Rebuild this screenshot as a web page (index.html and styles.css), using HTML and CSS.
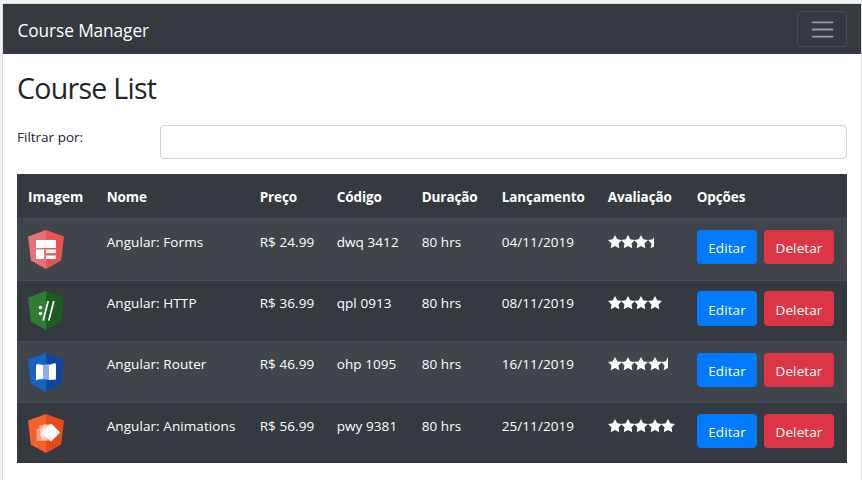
FILE: index.html
```
<!DOCTYPE html>
<html lang="pt-BR">
<head>
<meta charset="utf-8">
<title>Course Manager</title>
<link rel="stylesheet" href="styles.css">
</head>
<body>
<svg class="defs" aria-hidden="true">
  <symbol id="star" viewBox="0 0 14 14"><path d="M7 0 9.200 4.300l4.700.7-3.400 3.400.8 4.900L7 11.100l-4.300 2.200.8-4.900L.1 5l4.700-.7z"/></symbol>
</svg>
<div class="window">
  <nav class="navbar">
    <a class="brand">Course Manager</a>
    <button class="toggler" aria-label="Menu">
      <svg width="27" height="27" viewBox="0 0 30 30"><path d="M4 7h22M4 15h22M4 23h22" stroke="#fff" stroke-opacity=".5" stroke-width="2" stroke-linecap="round"/></svg>
    </button>
  </nav>
  <main class="content">
    <h2 class="title">Course List</h2>
    <div class="filter">
      <label class="filter-label" for="filter">Filtrar por:</label>
      <input class="filter-input" id="filter" type="text">
    </div>
    <table class="courses">
      <colgroup><col class="c-image"><col class="c-name"><col class="c-price"><col class="c-code"><col class="c-duration"><col class="c-date"><col class="c-rating"><col class="c-options"></colgroup>
      <thead>
        <tr><th>Imagem</th><th>Nome</th><th>Preço</th><th>Código</th><th>Duração</th><th>Lançamento</th><th>Avaliação</th><th>Opções</th></tr>
      </thead>
      <tbody>
        <tr class="odd tall low">
          <td><svg class="logo" viewBox="0 0 36 40"><path fill="#e57373" d="M18 0 0 6.500l2.800 24L18 39z"/><path fill="#ef5350" d="M18 0 36 6.500l-2.800 24L18 39z"/><path fill="#fff" d="M8 10h20v8H8zM8 19.500h8V29H8zM18 19.500h10v3.700H18zM18 25.500h10V29H18z"/></svg></td>
          <td>Angular: Forms</td><td>R$ 24.99</td><td>dwq 3412</td><td>80 hrs</td><td>04/11/2019</td>
          <td><div class="stars r35"><svg><use href="#star"/></svg><svg><use href="#star"/></svg><svg><use href="#star"/></svg><svg><use href="#star"/></svg></div></td>
          <td><div class="actions"><button class="btn edit">Editar</button><button class="btn delete">Deletar</button></div></td>
        </tr>
        <tr class="tight">
          <td><svg class="logo" viewBox="0 0 36 40"><path fill="#2e7d32" d="M18 0 0 6.500l2.800 24L18 39z"/><path fill="#1b5e20" d="M18 0 36 6.500l-2.800 24L18 39z"/><circle cx="12.500" cy="16.500" r="1.700" fill="#fff"/><circle cx="12.500" cy="22.500" r="1.700" fill="#fff"/><path d="M20.200 10 15.200 29.500M25.800 10 20.800 29.500" fill="none" stroke="#fff" stroke-width="1.700"/></svg></td>
          <td>Angular: HTTP</td><td>R$ 36.99</td><td>qpl 0913</td><td>80 hrs</td><td>08/11/2019</td>
          <td><div class="stars r40"><svg><use href="#star"/></svg><svg><use href="#star"/></svg><svg><use href="#star"/></svg><svg><use href="#star"/></svg></div></td>
          <td><div class="actions"><button class="btn edit">Editar</button><button class="btn delete">Deletar</button></div></td>
        </tr>
        <tr class="odd">
          <td><svg class="logo" viewBox="0 0 36 40"><path fill="#1565c0" d="M18 0 0 6.500l2.800 24L18 39z"/><path fill="#0d47a1" d="M18 0 36 6.500l-2.800 24L18 39z"/><path fill="#fff" d="m8 12 1.500-1 5.500 1v14l-5.500.500L8 27.500zM21 12l6-2 1 1v15.500l-7 .5z"/><path fill="#90afe0" d="m15 12 6-1v16l-6-1z"/></svg></td>
          <td>Angular: Router</td><td>R$ 46.99</td><td>ohp 1095</td><td>80 hrs</td><td>16/11/2019</td>
          <td><div class="stars r45"><svg><use href="#star"/></svg><svg><use href="#star"/></svg><svg><use href="#star"/></svg><svg><use href="#star"/></svg><svg><use href="#star"/></svg></div></td>
          <td><div class="actions"><button class="btn edit">Editar</button><button class="btn delete">Deletar</button></div></td>
        </tr>
        <tr class="low">
          <td><svg class="logo" viewBox="0 0 36 40"><path fill="#f4622c" d="M18 0 0 6.500l2.800 24L18 39z"/><path fill="#e64a19" d="M18 0 36 6.500l-2.800 24L18 39z"/><path fill="#fff" fill-opacity=".4" d="M8.500 14.500h13V27h-13z"/><path fill="#fff" fill-opacity=".45" d="m11 11.500 12-1.500 2 15-11.500 1z"/><path fill="#fff" fill-opacity=".5" d="m16 10 11 3-4 13-11-5z"/><path fill="#fff" d="m23 9.500 9.300 9-9.300 9-9.300-9z"/></svg></td>
          <td>Angular: Animations</td><td>R$ 56.99</td><td>pwy 9381</td><td>80 hrs</td><td>25/11/2019</td>
          <td><div class="stars r50"><svg><use href="#star"/></svg><svg><use href="#star"/></svg><svg><use href="#star"/></svg><svg><use href="#star"/></svg><svg><use href="#star"/></svg></div></td>
          <td><div class="actions"><button class="btn edit">Editar</button><button class="btn delete">Deletar</button></div></td>
        </tr>
      </tbody>
    </table>
  </main>
</div>
</body>
</html>
```
FILE: styles.css
```
* { box-sizing: border-box; }
body {
  margin: 0;
  height: 480px;
  overflow: hidden;
  padding: 3px 0 0 2px;
  background: #f2f2f2;
  color: #212529;
  font: 13.5px/21px "Open Sans", "Noto Sans", sans-serif;
}
.defs { display: none; }
.window {
  width: 860px;
  height: 477px;
  border: 1px solid #dcdcdc;
  border-bottom: 0;
  background: #fff;
}
.navbar {
  display: flex;
  justify-content: space-between;
  align-items: center;
  height: 50px;
  padding: 0 14px;
  background: #343a40;
}
.brand { color: #fff; font-size: 17.300px; letter-spacing: -0.1px; padding: 3px 0 0 0.5px; }
.toggler {
  display: flex;
  align-items: center;
  justify-content: center;
  width: 50px;
  height: 36px;
  padding: 0;
  border: 1px solid #484e53;
  border-radius: 4px;
  background: transparent;
}
.content { padding: 17px 14px 0; }
.title { margin: 0 0 20px; font-size: 28.500px; font-weight: 400; line-height: 34px; letter-spacing: -0.7px; }
.filter { display: flex; margin-bottom: 15px; }
.filter-label { width: 143px; padding-top: 2px; }
.filter-input { flex: 1; height: 34px; border: 1px solid #ced4da; border-radius: 4px; background: #fff; }
.courses { width: 830px; table-layout: fixed; border-collapse: separate; border-spacing: 0; background: #343a40; color: #fff; letter-spacing: 0.08px; }
.c-image { width: 79px; }
.c-name { width: 153px; }
.c-price { width: 77px; }
.c-code { width: 85px; }
.c-duration { width: 80px; }
.c-date { width: 106px; }
.c-rating { width: 89px; }
.c-options { width: 161px; }
th { height: 44px; padding: 3px 0 0 10.700px; text-align: left; font-weight: 700; letter-spacing: -0.1px; white-space: nowrap; }
td { height: 61px; padding: 12px 0 0 10.700px; border-top: 1px solid #454d55; vertical-align: top; white-space: nowrap; }
td:first-child, td:last-child { padding: 11px 0 0 11px; }
th:first-child { padding-left: 11px; letter-spacing: 0.1px; }
.tall td { height: 62px; }
.low td:not(:first-child):not(:last-child) { padding-top: 13px; }
.tight td:first-child, .tight td:last-child { padding-top: 10px; }
.odd { background: #3f454a; }
.logo { display: block; width: 36px; height: 40px; }
.stars { display: flex; height: 14px; margin-top: 3px; overflow: hidden; }
.stars svg { flex: none; width: 14px; height: 14px; margin-right: -0.65px; fill: #fff; }
.r35 { width: 46.500px; }
.r40 { width: 54px; }
.r45 { width: 60.500px; }
.r50 { width: 68px; }
.actions { display: flex; gap: 7px; }
.btn { height: 34px; padding: 2px 0 0; border: 0; border-radius: 4px; color: #fff; font: inherit; letter-spacing: 0.1px; }
.tight .btn { height: 35px; padding-top: 3px; }
.edit { width: 60px; background: #007bff; }
.delete { width: 70px; background: #dc3545; }
```
